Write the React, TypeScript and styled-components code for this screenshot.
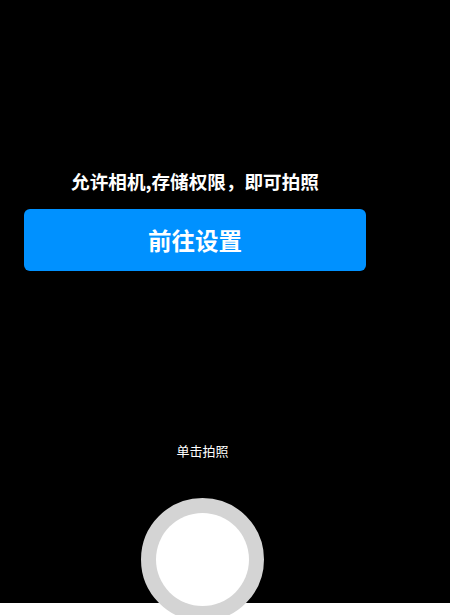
import React from 'react';
import styled, {createGlobalStyle} from "styled-components";

const GlobalStyle = createGlobalStyle`
    html, body {
        margin: 0;
        padding: 0;
        background: #000;
        overflow: hidden;
    }

    body {
        font-family: "Noto Sans CJK SC", "Noto Sans", sans-serif;
    }
`;

export default function App() {
    return (
        <>
            <GlobalStyle/>
            <Page>
                <CameraArea>
                    <PermissionBlock>
                        <PermissionText>允许相机,存储权限，即可拍照</PermissionText>
                        <SettingsButton type="button">前往设置</SettingsButton>
                    </PermissionBlock>

                    <Controls>
                        <Hint>单击拍照</Hint>
                        <Shutter type="button" aria-label="拍照">
                            <ShutterInner/>
                        </Shutter>
                    </Controls>
                </CameraArea>
                <BottomBar/>
            </Page>
        </>
    );
}

const Page = styled.div`
    width: 450px;
    height: 615px;
    display: flex;
    flex-direction: column;
    background: #000;
    overflow: hidden;
`;

const CameraArea = styled.div`
    height: 603px;
    display: flex;
    flex-direction: column;
    justify-content: space-between;
`;

const PermissionBlock = styled.div`
    width: 342px;
    margin: 167px 0 0 24px;
    display: flex;
    flex-direction: column;
    align-items: center;
    gap: 15px;
`;

const PermissionText = styled.div`
    color: #fff;
    font-size: 18.6px;
    font-weight: 700;
    line-height: 27px;
`;

const SettingsButton = styled.button`
    width: 100%;
    height: 62px;
    border: none;
    border-radius: 6px;
    background: #0091ff;
    color: #fff;
    font-family: inherit;
    font-size: 23.5px;
    font-weight: 700;
    cursor: pointer;
`;

const Controls = styled.div`
    width: 405px;
    display: flex;
    flex-direction: column;
    align-items: center;
    gap: 37px;
    margin-bottom: -18px;
    position: relative;
    z-index: 1;
`;

const Hint = styled.div`
    color: #fff;
    font-size: 13px;
    line-height: 20px;
`;

const Shutter = styled.button`
    width: 123px;
    height: 123px;
    padding: 0;
    border: 15px solid #d4d4d4;
    border-radius: 50%;
    background: #d4d4d4;
    display: flex;
    align-items: center;
    justify-content: center;
    cursor: pointer;
`;

const ShutterInner = styled.span`
    width: 93px;
    height: 93px;
    border-radius: 50%;
    background: #fff;
`;

const BottomBar = styled.div`
    height: 12px;
    background: #fff;
`;
